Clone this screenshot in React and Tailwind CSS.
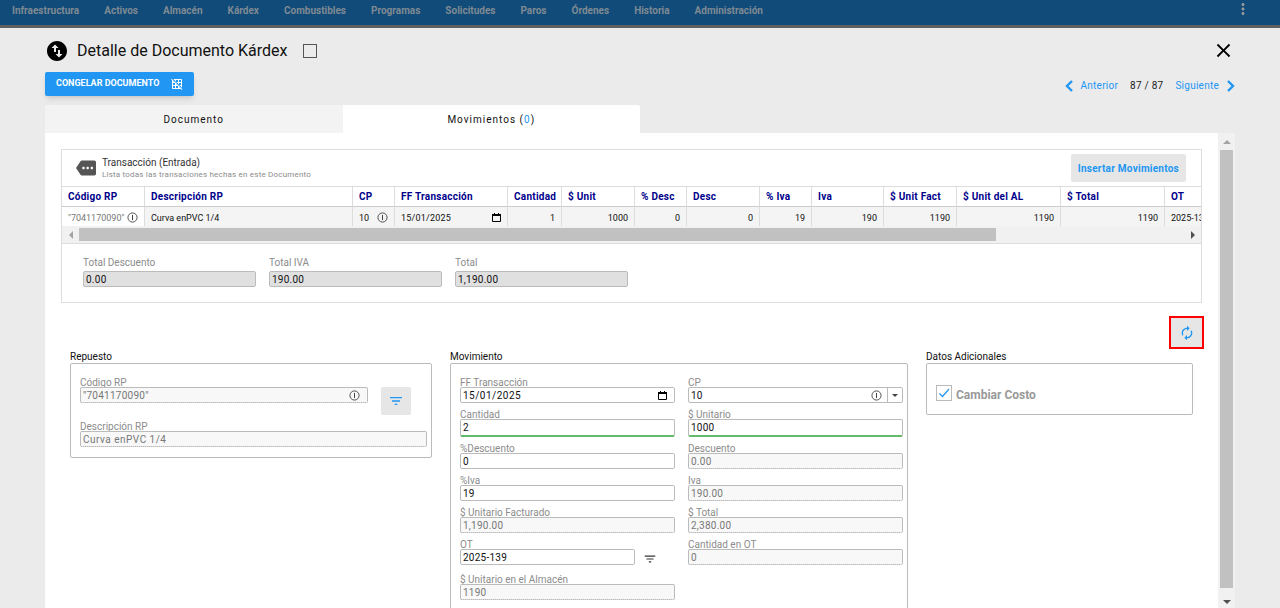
import { useState } from 'react';
import {
  MdAutorenew,
  MdClose,
  MdFilterList,
  MdGridOff,
  MdMore,
  MdMoreVert,
  MdSwapVerticalCircle,
} from 'react-icons/md';

const menu = [
  'Infraestructura', 'Activos', 'Almacén', 'Kárdex', 'Combustibles', 'Programas',
  'Solicitudes', 'Paros', 'Órdenes', 'Historia', 'Administración',
];

const columns = [
  { label: 'Código RP',      value: '"7041170090"',    width: 'w-[83px]',  kind: 'code' },
  { label: 'Descripción RP', value: 'Curva enPVC 1/4', width: 'w-[208px]', kind: 'text' },
  { label: 'CP',             value: '10',              width: 'w-[42px]',  kind: 'info' },
  { label: 'FF Transacción', value: '15/01/2025',      width: 'w-[113px]', kind: 'date' },
  { label: 'Cantidad',       value: '1',               width: 'w-[54px]',  kind: 'number' },
  { label: '$ Unit',         value: '1000',            width: 'w-[73px]',  kind: 'number' },
  { label: '% Desc',         value: '0',               width: 'w-[52px]',  kind: 'number' },
  { label: 'Desc',           value: '0',               width: 'w-[73px]',  kind: 'number' },
  { label: '% Iva',          value: '19',              width: 'w-[52px]',  kind: 'number' },
  { label: 'Iva',            value: '190',             width: 'w-[72px]',  kind: 'number' },
  { label: '$ Unit Fact',    value: '1190',            width: 'w-[73px]',  kind: 'number' },
  { label: '$ Unit del AL',  value: '1190',            width: 'w-[104px]', kind: 'number' },
  { label: '$ Total',        value: '1190',            width: 'w-[104px]', kind: 'number' },
  { label: 'OT',             value: '2025-139',        width: 'w-[104px]', kind: 'text' },
];

const totals = [
  { id: 'total-descuento', label: 'Total Descuento', value: '0.00' },
  { id: 'total-iva',       label: 'Total IVA',       value: '190.00' },
  { id: 'total',           label: 'Total',           value: '1,190.00' },
];

function InfoIcon() {
  return (
    <svg viewBox="0 0 12 12" className="size-[11px] shrink-0 text-[#444]" fill="none" stroke="currentColor">
      <circle cx="6" cy="6" r="5" />
      <path d="M6 3.2v5.6" strokeWidth="1.1" />
    </svg>
  );
}

function CalendarIcon() {
  return (
    <svg viewBox="0 0 9 9" className="size-[9px] shrink-0 text-black" fill="none" stroke="currentColor">
      <path d="M.5 1.5h8v7h-8z" />
      <path d="M0 2h9" strokeWidth="2" />
      <path d="M2.5 0v1M6.5 0v1" />
    </svg>
  );
}

function Chevron({ d }) {
  return (
    <svg viewBox="0 0 8 12" className="h-3 w-2" fill="none" stroke="currentColor" strokeWidth="2.4">
      <path d={d} />
    </svg>
  );
}

function Arrow({ points, className }) {
  return (
    <svg viewBox="0 0 8 8" className={`size-2 ${className}`} fill="currentColor">
      <path d={points} />
    </svg>
  );
}

const fieldTone = {
  normal:   'border border-[#bbb] bg-white text-[#111] h-4',
  valid:    'border border-[#bbb] border-b-2 border-b-[#66bb6a] bg-white text-[#111] h-[18px]',
  disabled: 'border border-[#bbb] border-b-[#999] [border-bottom-style:dotted] bg-[#f8f8f8] text-[#777] h-4',
};

function Field({ id, label, value, tone = 'normal', spacing = 'tracking-wide', icon, action }) {
  const [text, setText] = useState(value);

  return (
    <div>
      <label htmlFor={id} className="block leading-2 text-[#8c8c8c]">{label}</label>
      <div className="flex items-start gap-2">
        <div className={`flex flex-1 items-center rounded-xs ${fieldTone[tone]}`}>
          <input
            id={id}
            value={text}
            onChange={(e) => setText(e.target.value)}
            disabled={tone === 'disabled'}
            className={`h-full w-full min-w-0 flex-1 px-[2px] outline-none ${spacing}`}
          />
          {icon && <span className="pr-[7px]">{icon}</span>}
        </div>
        {action}
      </div>
    </div>
  );
}

function Group({ title, className = '', children }) {
  return (
    <section className="flex flex-col">
      <h3 className="leading-3 text-[#111]">{title}</h3>
      <div className={`rounded-xs border border-[#bbb] pt-[15px] ${className}`}>{children}</div>
    </section>
  );
}

function Cell({ col }) {
  const base = 'h-[19px] overflow-hidden border-r border-[#ddd] px-[6px] pt-[2px] whitespace-nowrap';
  if (col.kind === 'number') {
    return <td className={`${base} bg-[#f4f4f4] text-right`}>{col.value}</td>;
  }
  if (col.kind === 'text') {
    return <td className={`${base} bg-[#f4f4f4]`}>{col.value}</td>;
  }
  return (
    <td className={`${base} ${col.kind === 'code' ? 'text-[#777]' : 'bg-[#f4f4f4]'}`}>
      <div className="flex items-center justify-between">
        <span className={col.kind === 'date' ? 'tracking-wide' : ''}>{col.value}</span>
        {col.kind === 'date' ? <CalendarIcon /> : <InfoIcon />}
      </div>
    </td>
  );
}

function Movements() {
  return (
    <section className="border border-[#ddd]">
      <header className="flex h-9 items-center pr-[15px] pl-[14px]">
        <MdMore className="size-5 text-[#555]" />
        <div className="ml-[6px] flex-1">
          <h2 className="leading-[14px] text-[#333]">Transacción (Entrada)</h2>
          <p className="text-[8px] leading-[10px] tracking-wide text-[#8c8c8c]">
            Lista todas las transaciones hechas en este Documento
          </p>
        </div>
        <button className="h-7 rounded-xs bg-[#e6e6e6] px-[7px] font-bold tracking-wide text-[#2196f3]">
          Insertar Movimientos
        </button>
      </header>

      <div className="overflow-hidden">
        <table className="w-[1207px] table-fixed border-separate border-spacing-0">
          <thead>
            <tr>
              {columns.map((col) => (
                <th
                  key={col.label}
                  className={`${col.width} h-[21px] border-y border-r border-[#ddd] border-b-[#ccc] px-[6px] text-left font-bold tracking-wide whitespace-nowrap text-[#00008b]`}
                >
                  {col.label}
                </th>
              ))}
            </tr>
          </thead>
          <tbody className="text-[9px] leading-3 text-[#111]">
            <tr>
              {columns.map((col) => <Cell key={col.label} col={col} />)}
            </tr>
          </tbody>
        </table>
      </div>

      {/* Barra horizontal */}
      <div className="flex h-[18px] items-center border-b border-[#ddd] bg-[#f1f1f1]">
        <div className="flex w-[17px] justify-center">
          <Arrow points="M6 0v8L2 4z" className="text-[#a3a3a3]" />
        </div>
        <div className="flex-1">
          <div className="h-[13px] w-[83%] bg-[#c1c1c1]" />
        </div>
        <div className="flex w-[17px] justify-center">
          <Arrow points="M2 0v8l4-4z" className="text-[#505050]" />
        </div>
      </div>

      <div className="flex gap-[13px] pt-[10px] pb-[15px] pl-[21px]">
        {totals.map((t) => (
          <div key={t.id} className="w-[173px]">
            <label htmlFor={t.id} className="block leading-[17px] text-[#8c8c8c]">{t.label}</label>
            <input
              id={t.id}
              value={t.value}
              readOnly
              className="block h-4 w-full rounded-xs border border-[#bbb] bg-[#e0e0e0] px-[2px] tracking-wide text-[#111]"
            />
          </div>
        ))}
      </div>
    </section>
  );
}

function CostCenter() {
  return (
    <div>
      <label htmlFor="cp" className="block leading-2 text-[#8c8c8c]">CP</label>
      <div className="flex h-4 items-center rounded-xs border border-[#bbb]">
        <select id="cp" defaultValue="10" className="h-full min-w-0 flex-1 appearance-none px-[2px] tracking-wide text-[#111] outline-none">
          <option>10</option>
        </select>
        <span className="pr-[5px]"><InfoIcon /></span>
        <span className="flex h-full w-[15px] items-center justify-center border-l border-[#bbb]">
          <Arrow points="M1 3h6L4 6z" className="text-[#444]" />
        </span>
      </div>
    </div>
  );
}

export default function App() {
  const [cost, setCost] = useState(true);

  return (
    <div className="flex h-screen flex-col overflow-hidden bg-[#ebebeb] font-[Roboto,sans-serif] text-[10px] font-normal">
      <nav className="flex h-7 shrink-0 items-center border-b-[3px] border-[#5f5f5f] bg-[#114b7a] pb-1 pl-3 text-[#7f8a92]">
        <div className="flex flex-1 gap-[25px] font-bold">
          {menu.map((item) => <a key={item} href="#">{item}</a>)}
        </div>
        <button aria-label="Más opciones" className="mr-7 pb-1">
          <MdMoreVert className="size-[18px] text-[#9a9a9a]" />
        </button>
      </nav>

      <main className="flex min-h-0 flex-1 flex-col px-[45px]">
        <div className="flex h-11 shrink-0 items-center pt-px">
          <MdSwapVerticalCircle className="size-6 text-black" />
          <label htmlFor="doc" className="ml-2 text-base text-[#111]">Detalle de Documento Kárdex</label>
          <input id="doc" type="checkbox" className="ml-4 size-[14px] appearance-none border border-[#555]" />
          <button aria-label="Cerrar" className="ml-auto">
            <MdClose className="size-[23px] text-black" />
          </button>
        </div>

        <div className="flex h-[33px] shrink-0 items-start justify-between">
          <button className="flex h-6 items-center gap-3 rounded-xs bg-[#2196f3] px-[11px] text-[9px] font-bold text-white shadow-md">
            CONGELAR DOCUMENTO
            <MdGridOff className="size-3" />
          </button>
          <div className="mt-[6px] flex items-center tracking-wide text-[#2196f3]">
            <a href="#" className="flex items-center gap-2"><Chevron d="M7 1 2 6l5 5" />Anterior</a>
            <span className="mx-3 text-[#222]">87 / 87</span>
            <a href="#" className="flex items-center gap-2">Siguiente<Chevron d="m1 1 5 5-5 5" /></a>
          </div>
        </div>

        <div className="flex h-7 shrink-0 tracking-widest text-[#111]">
          <button className="w-1/4 rounded-tl-xs bg-[#f3f3f3]">Documento</button>
          <button className="w-1/4 rounded-tr-xs bg-white">
            Movimientos (<span className="text-[#2196f3]">0</span>)
          </button>
        </div>

        <div className="flex min-h-0 flex-1 bg-white">
          <div className="min-w-0 flex-1 overflow-hidden p-4">
            <Movements />

            <div className="mt-[15px] flex justify-end">
              <button
                aria-label="Actualizar"
                className="flex h-[29px] w-[31px] items-center justify-center bg-[#e6e6e6] text-[#2196f3] ring-2 ring-[#f00]"
              >
                <MdAutorenew className="size-4" />
              </button>
            </div>

            <div className="mt-1 grid grid-cols-[362fr_458fr_267fr] items-start gap-[18px] px-[9px]">
              <Group title="Repuesto" className="pr-1 pb-[10px] pl-[9px]">
                <div className="flex gap-[13px] pr-4">
                  <div className="flex-1">
                    <Field id="codigo" label="Código RP" value={'"7041170090"'} tone="disabled" icon={<InfoIcon />} />
                  </div>
                  <button aria-label="Filtrar repuesto" className="mt-2 flex h-7 w-[30px] items-center justify-center rounded-xs bg-[#e6e6e6] text-[#2196f3]">
                    <MdFilterList className="size-4" />
                  </button>
                </div>
                <div className="mt-2">
                  <Field id="descripcion" label="Descripción RP" value="Curva enPVC 1/4" tone="disabled" spacing="tracking-wider" />
                </div>
              </Group>

              <Group title="Movimiento" className="grid grid-cols-2 gap-x-[13px] gap-y-2 pr-1 pb-[10px] pl-[9px]">
                <Field id="ff" label="FF Transacción" value="15/01/2025" spacing="tracking-wider" icon={<CalendarIcon />} />
                <CostCenter />
                <Field id="cantidad" label="Cantidad" value="2" tone="valid" />
                <Field id="unitario" label="$ Unitario" value="1000" tone="valid" />
                <Field id="pdesc" label="%Descuento" value="0" />
                <Field id="desc" label="Descuento" value="0.00" tone="disabled" />
                <Field id="piva" label="%Iva" value="19" />
                <Field id="iva" label="Iva" value="190.00" tone="disabled" />
                <Field id="facturado" label="$ Unitario Facturado" value="1,190.00" tone="disabled" />
                <Field id="total-mov" label="$ Total" value="2,380.00" tone="disabled" />
                <Field
                  id="ot"
                  label="OT"
                  value="2025-139"
                  action={
                    <button aria-label="Filtrar OT" className="mr-[18px] flex h-[19px] items-center text-[#333]">
                      <MdFilterList className="size-[14px]" />
                    </button>
                  }
                />
                <Field id="cantidad-ot" label="Cantidad en OT" value="0" tone="disabled" />
                <Field id="almacen" label="$ Unitario en el Almacén" value="1190" tone="disabled" />
              </Group>

              <Group title="Datos Adicionales" className="pb-[9px] pl-[9px]">
                <label className="mt-[6px] flex items-start gap-1 text-xs font-bold text-[#999]">
                  <span className="grid">
                    <input
                      type="checkbox"
                      checked={cost}
                      onChange={(e) => setCost(e.target.checked)}
                      className="col-start-1 row-start-1 size-4 appearance-none border border-[#bbb]"
                    />
                    {cost && (
                      <svg viewBox="0 0 16 16" className="pointer-events-none col-start-1 row-start-1 size-4 text-[#2196f3]" fill="none" stroke="currentColor" strokeWidth="1.2">
                        <path d="m3.5 8.5 3 3L13 4" />
                      </svg>
                    )}
                  </span>
                  <span className="leading-5">Cambiar Costo</span>
                </label>
              </Group>
            </div>
          </div>

          {/* Barra vertical */}
          <div className="flex w-[17px] shrink-0 flex-col items-center bg-[#f1f1f1]">
            <div className="flex h-[17px] items-center"><Arrow points="M0 6h8L4 2z" className="text-[#a3a3a3]" /></div>
            <div className="w-[13px] flex-1 bg-[#c1c1c1]" />
            <div className="flex h-5 items-end pb-[2px]"><Arrow points="M0 2h8L4 6z" className="text-[#505050]" /></div>
          </div>
        </div>
      </main>
    </div>
  );
}
